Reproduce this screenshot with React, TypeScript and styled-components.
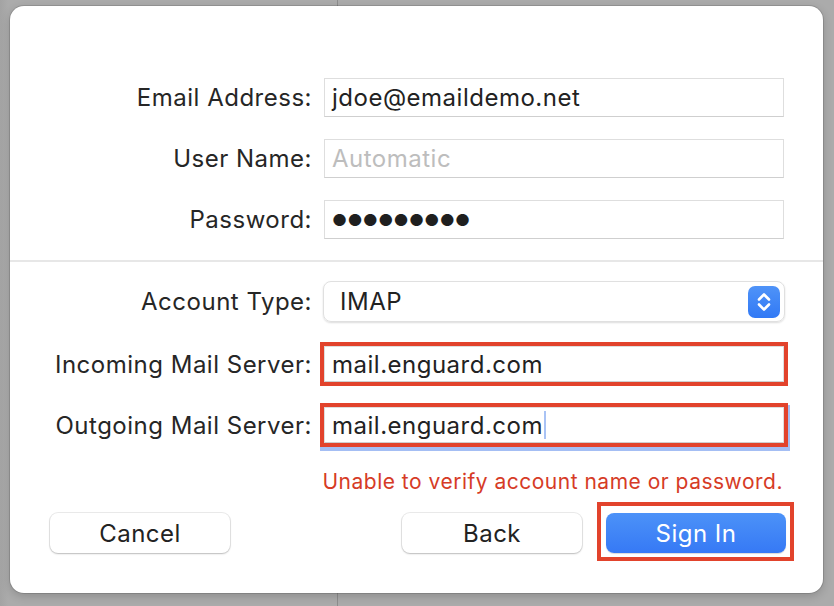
import React from 'react'
import styled, { createGlobalStyle } from 'styled-components'

const GlobalStyle = createGlobalStyle`
  html, body {
    margin: 0;
    padding: 0;
    background: #ababab;
    font-family: 'Inter', 'Liberation Sans', sans-serif;
  }
`

const Backdrop = styled.div`
  box-sizing: border-box;
  height: 606px;
  padding: 6px 11px 13px 10px;
  background:
    linear-gradient(to right, transparent 337px, #8d8d8d 337px, #8d8d8d 338px, transparent 338px),
    linear-gradient(to right, #a3a3a3 0, #ababab 8px);
`

const Sheet = styled.div`
  box-sizing: border-box;
  height: 587px;
  background: #fff;
  border-radius: 14px;
  box-shadow: 0 0 0 1px rgba(0, 0, 0, 0.12), 0 3px 10px rgba(0, 0, 0, 0.18);
  padding-top: 72px;
  display: flex;
  flex-direction: column;
`

const FieldGrid = styled.div<{ $gap: number }>`
  display: grid;
  grid-template-columns: 290px 460px;
  column-gap: 12px;
  row-gap: ${p => p.$gap}px;
  padding-left: 12px;
  align-items: center;
`

const Label = styled.label`
  text-align: right;
  font-size: 24px;
  color: #262626;
  letter-spacing: 0.5px;
  white-space: nowrap;
`

const TextField = styled.div<{ $muted?: boolean; $flag?: boolean; $focused?: boolean }>`
  box-sizing: border-box;
  height: ${p => (p.$flag ? 36 : 39)}px;
  margin: ${p => (p.$flag ? '1px 0' : '0')};
  border: 1px solid #dedede;
  border-bottom-color: #cfcfcf;
  background: #fff;
  display: flex;
  align-items: center;
  padding-left: 7px;
  font-size: 24px;
  letter-spacing: 0.5px;
  color: ${p => (p.$muted ? '#bdbdbd' : '#222')};
  outline: ${p => (p.$flag ? '4px solid #e2432c' : 'none')};
  box-shadow: ${p => (p.$focused ? '1px 3px 0 5px #a4bef4' : 'none')};
`

const Dots = styled.span`
  font-size: 16.5px;
  letter-spacing: 0.3px;
  color: #1f1f1f;
`

const Caret = styled.span`
  display: inline-block;
  width: 2px;
  height: 28px;
  margin-left: 1px;
  background: #a9c3f5;
`

const Divider = styled.hr`
  border: none;
  height: 2px;
  background: #e7e7e7;
  margin: 21px 0 19px;
`

const Popup = styled.div`
  box-sizing: border-box;
  height: 41px;
  margin-left: -1px;
  margin-right: -1px;
  border-radius: 8px;
  border: 1px solid #e0e0e0;
  box-shadow: 0 1px 2px rgba(0, 0, 0, 0.14);
  display: flex;
  align-items: center;
  justify-content: space-between;
  padding: 0 4px 0 16px;
  font-size: 24px;
  letter-spacing: 0.5px;
  color: #222;
`

const Stepper = styled.span`
  width: 32px;
  height: 32px;
  border-radius: 7px;
  background: linear-gradient(#4f93f8, #3179f5);
  display: flex;
  align-items: center;
  justify-content: center;
`

const ErrorText = styled.div`
  margin: 25px 40px 0 0;
  text-align: right;
  font-size: 21px;
  letter-spacing: 0.5px;
  color: #d63b26;
`

const ButtonRow = styled.div`
  display: flex;
  align-items: center;
  margin-top: 19px;
  padding: 0 37px 0 40px;
  gap: 24px;
`

const Spacer = styled.div`
  flex: 1;
`

const Highlight = styled.span`
  display: flex;
  margin: -11px -8px -8px -9px;
  padding: 7px 4px 4px 5px;
  border: 4px solid #e2432c;
`

const Button = styled.button<{ $primary?: boolean }>`
  width: 180px;
  height: 40px;
  border-radius: 8px;
  border: none;
  padding: 0;
  font-family: inherit;
  font-size: 24px;
  letter-spacing: 0.5px;
  color: ${p => (p.$primary ? '#fff' : '#222')};
  background: ${p => (p.$primary ? 'linear-gradient(#4c92f8, #3679f5)' : '#fff')};
  box-shadow: ${p =>
    p.$primary
      ? '0 1px 1px rgba(0, 0, 0, 0.15)'
      : '0 0 0 1px rgba(0, 0, 0, 0.08), 0 1px 2px rgba(0, 0, 0, 0.2)'};
`

const Chevrons = () => (
  <svg width="18" height="24" viewBox="0 0 18 24" fill="none" stroke="#fff" strokeWidth="2.6" strokeLinecap="round" strokeLinejoin="round">
    <path d="M4 9.5 L9 4.5 L14 9.5" />
    <path d="M4 14.5 L9 19.5 L14 14.5" />
  </svg>
)

export default function App() {
  return (
    <>
      <GlobalStyle />
      <Backdrop>
        <Sheet>
          <FieldGrid $gap={22}>
            <Label>Email Address:</Label>
            <TextField>jdoe@emaildemo.net</TextField>
            <Label>User Name:</Label>
            <TextField $muted>Automatic</TextField>
            <Label>Password:</Label>
            <TextField>
              <Dots>●●●●●●●●●</Dots>
            </TextField>
          </FieldGrid>

          <Divider />

          <FieldGrid $gap={23}>
            <Label>Account Type:</Label>
            <Popup>
              IMAP
              <Stepper>
                <Chevrons />
              </Stepper>
            </Popup>
            <Label>Incoming Mail Server:</Label>
            <TextField $flag>mail.enguard.com</TextField>
            <Label>Outgoing Mail Server:</Label>
            <TextField $flag $focused>
              mail.enguard.com
              <Caret />
            </TextField>
          </FieldGrid>

          <ErrorText>Unable to verify account name or password.</ErrorText>

          <ButtonRow>
            <Button>Cancel</Button>
            <Spacer />
            <Button>Back</Button>
            <Highlight>
              <Button $primary>Sign In</Button>
            </Highlight>
          </ButtonRow>
        </Sheet>
      </Backdrop>
    </>
  )
}
